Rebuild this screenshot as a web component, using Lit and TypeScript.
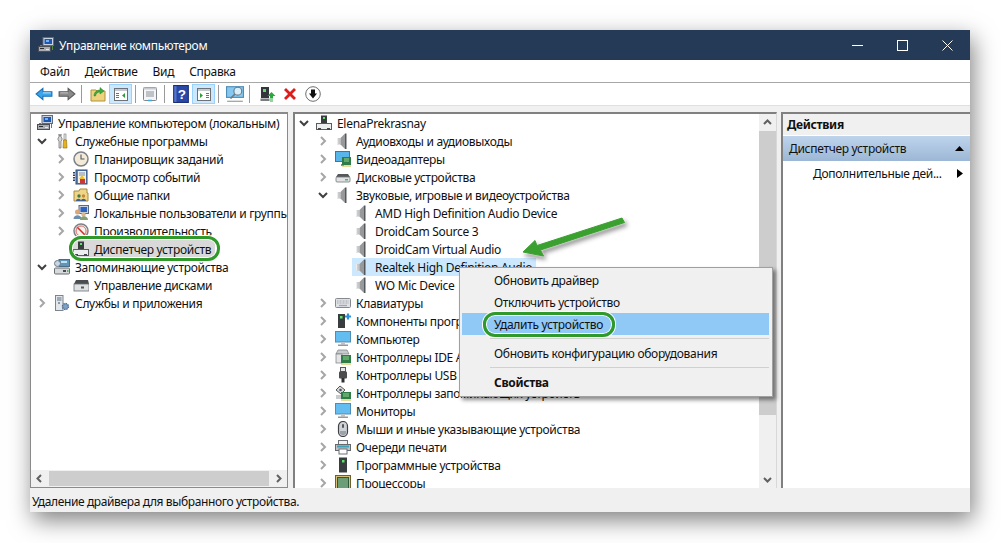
import { LitElement, css, html, svg } from "lit";
import { customElement } from "lit/decorators.js";

// 16x16 icon drawings, keyed by name
const ICONS: Record<string, unknown> = {
  mgmt: svg`<rect x="5" y="0.5" width="10.5" height="8" fill="#c9d3e0" stroke="#5d6b80"/><rect x="6.5" y="2" width="7.5" height="5" fill="#1f55b5"/><rect x="8" y="3" width="3" height="2" fill="#6fb4ef"/><rect x="0.5" y="9.5" width="12" height="5" fill="#a9adb3" stroke="#4b4f55"/><rect x="2" y="11" width="4" height="1" fill="#2a2d31"/><rect x="8" y="12" width="3" height="1" fill="#e8e8e8"/><path d="M2 8h2v1H2zM14 9h1v4h-1z" fill="#4f8f3c"/>`,
  tools: svg`<path d="M5 1v3l-1 1v2l1 1v7h2V8l1-1V5L7 4V1L6.500 3h-1z" fill="#d7d7d7" stroke="#6b6b6b" stroke-width=".7"/><rect x="10" y="1" width="2" height="6" fill="#e8e8e8" stroke="#777" stroke-width=".6"/><path d="M9.500 7h3l.5 8h-4z" fill="#e8b21a" stroke="#8f6a07" stroke-width=".6"/>`,
  clock: svg`<circle cx="8" cy="8" r="7" fill="#f3ead8" stroke="#7d8088" stroke-width="1.500"/><path d="M8 3.500V8h3.500" fill="none" stroke="#55585e" stroke-width="1.100"/>`,
  event: svg`<rect x="3" y="1" width="11" height="14" fill="#5f84b8" stroke="#2f4c78"/><rect x="5" y="2" width="8" height="12" fill="#f3f0e5"/><path d="M6 4h6M6 6h6" stroke="#7b90ad"/><path d="M9 6l3 4H6z" fill="#efc22d"/><rect x="7" y="10" width="5" height="4" fill="#c9383a"/><path d="M1 3v10" stroke="#27406a" stroke-width="2" stroke-dasharray="1.500 1"/>`,
  share: svg`<path d="M1 4h5l1-2h7v4h1v8H1z" fill="#f0d588" stroke="#a88a3c"/><circle cx="6" cy="9" r="1.700" fill="#3f7d4a"/><circle cx="10.500" cy="9" r="1.700" fill="#c08a3a"/><path d="M3 14c0-3 5-3 5 0zM8 14c0-3 5-3 5 0z" fill="#3d5f8e"/>`,
  users: svg`<rect x="6" y="0.500" width="9.500" height="8" fill="#c9d3e0" stroke="#5d6b80"/><rect x="7.500" y="2" width="6.500" height="5" fill="#2a63c2"/><circle cx="4.500" cy="7" r="2.500" fill="#d8a878"/><path d="M0.500 14c0-5 8-5 8 0z" fill="#6a8fb5"/><circle cx="10.500" cy="9.500" r="2.200" fill="#e0b48a"/><path d="M7 15c0-5 8-5 8 0z" fill="#86a070"/>`,
  perf: svg`<circle cx="8" cy="8" r="7" fill="#f7f3ea" stroke="#7d8088" stroke-width="1.500"/><path d="M4 4l8 8" stroke="#cc2f2f" stroke-width="1.600"/><path d="M8 3a5 5 0 1 0 .1 0" fill="none" stroke="#d85a5a"/>`,
  devmgr: svg`<rect x="5" y="0.500" width="6" height="7.500" fill="#3a3d40"/><rect x="7" y="2" width="2" height="2" fill="#5fe26a"/><rect x="0.500" y="8.500" width="15" height="6" fill="#eceef0" stroke="#5a5d60"/><rect x="2" y="13" width="3" height="2" fill="#44484c"/><rect x="11" y="13" width="3" height="2" fill="#44484c"/>`,
  storage: svg`<rect x="5" y="0.500" width="10.500" height="7" fill="#5f96b8" stroke="#4b6c86"/><rect x="7" y="2" width="6" height="2" fill="#bfe3f5"/><circle cx="3.500" cy="4.500" r="3" fill="#c7d6e0" stroke="#66798a"/><rect x="0.500" y="9" width="15" height="6" rx="1" fill="#d7dadd" stroke="#6a6d70"/><rect x="9" y="11" width="3" height="2" fill="#4a4d50"/><rect x="13" y="11" width="1.500" height="2" fill="#4bbd52"/>`,
  disk: svg`<path d="M3 3h12l1 4H1z" fill="#4a4d50"/><rect x="1" y="7" width="15" height="7" fill="#dfe1e3" stroke="#6d7073" stroke-width=".8"/><rect x="8" y="9.500" width="3" height="2" fill="#55585b"/>`,
  services: svg`<rect x="1.500" y="0.500" width="7.500" height="15" fill="#e3e6ea" stroke="#7c848e"/><path d="M3 3h4.500M3 5h4.500" stroke="#5d6f84"/><circle cx="5" cy="8" r="1" fill="#6d7f92"/><circle cx="11.500" cy="11.500" r="3" fill="#7ea0c4" stroke="#4c6f97" stroke-width="1.400" stroke-dasharray="1.500 .8"/>`,
  speaker: svg`<rect x="2" y="5" width="3.500" height="6.500" fill="#c4c6c8"/><rect x="2" y="5" width="1.200" height="6.500" fill="#ececec"/><path d="M5.500 5l4.500-4.500v15.500l-4.500-4.500z" fill="#97999b"/><path d="M10 0.500h1.500v15.500H10z" fill="#55585b"/>`,
  video: svg`<rect x="0.500" y="0.500" width="14" height="10" fill="#58b5ea" stroke="#3279ad"/><path d="M6 14h3" stroke="#8a8a8a" stroke-width="2"/><rect x="7" y="6" width="9" height="8" fill="#2e7d48"/><path d="M9 8h5M9 10h5" stroke="#9bd28d"/><path d="M7 15h9" stroke="#d8b53e"/>`,
  hdd: svg`<path d="M3 5h10l2 3H1z" fill="#55585b"/><rect x="1" y="8" width="14" height="5" rx="1" fill="#e0e2e4" stroke="#737679" stroke-width=".8"/><rect x="10" y="10" width="3" height="1.500" fill="#4bbd52"/>`,
  keyboard: svg`<rect x="0.500" y="3.500" width="15" height="9" rx="1" fill="#dfe2e5" stroke="#85898e"/><path d="M2 6h12M2 8h12" stroke="#a3a7ac" stroke-dasharray="1 .5"/><path d="M4 10.500h8" stroke="#a3a7ac" stroke-width="1.300"/>`,
  soft: svg`<rect x="3" y="1" width="7" height="14" fill="#3a3d40"/><rect x="5" y="3" width="2.500" height="2.500" fill="#5fe26a"/><path d="M13 .5v6M10 3.500h6" stroke="#2f8fd8" stroke-width="2.200"/>`,
  monitor: svg`<rect x="0.500" y="0.500" width="15" height="10.500" fill="#63bdf0" stroke="#4e8fb8"/><rect x="6" y="11" width="4" height="2.500" fill="#c0c4c8"/><rect x="3" y="13.500" width="10" height="1.500" fill="#94989c"/>`,
  ide: svg`<path d="M3 1h9l2 4H1z" fill="#c9ccce" stroke="#7a7d80" stroke-width=".7"/><rect x="1" y="5" width="6" height="9" fill="#e2e4e6" stroke="#7a7d80" stroke-width=".7"/><rect x="6" y="6" width="10" height="8" fill="#2e7d48"/><path d="M8 8h6M8 10h6" stroke="#9bd28d"/><path d="M6 15h10" stroke="#d8b53e"/>`,
  usb: svg`<rect x="5.500" y="0.500" width="5" height="4" fill="#e6e6e6" stroke="#55585b"/><rect x="4" y="4.500" width="8" height="7" rx="1" fill="#4a4d50"/><rect x="6.500" y="11" width="3" height="4.500" fill="#2d2f31"/>`,
  sata: svg`<path d="M5 1l5 4-4 4-5-4z" fill="#d6d8da" stroke="#55585b"/><circle cx="5.500" cy="5" r="1.300" fill="#55585b"/><rect x="1" y="10" width="5" height="4" fill="#c9ccce"/><rect x="6" y="7" width="10" height="7" fill="#2e7d48"/><path d="M8 9h6M8 11h6" stroke="#9bd28d"/><path d="M6 15h10" stroke="#d8b53e"/>`,
  mouse: svg`<rect x="3.500" y="0.500" width="9" height="15" rx="4.500" fill="#cfd3d7" stroke="#3e4145" stroke-width="1.200"/><rect x="7" y="3" width="2" height="4" rx="1" fill="#55595e"/><path d="M5 10h6v3l-3 1.500L5 13z" fill="#9da2a8"/>`,
  printer: svg`<rect x="3.500" y="1.500" width="9" height="4" fill="#f2f2f2" stroke="#6c6f73"/><rect x="0.500" y="5.500" width="15" height="6" fill="#bfc3c7" stroke="#65686c"/><rect x="2" y="6.500" width="12" height="2" fill="#3fa0b8"/><rect x="4" y="10" width="8" height="5" fill="#fff" stroke="#6c6f73"/>`,
  tower: svg`<rect x="4" y="0.500" width="8" height="15" fill="#3a3d40"/><rect x="7" y="3" width="2.500" height="2.500" fill="#5fe26a"/>`,
  cpu: svg`<rect x="0.500" y="0.500" width="15" height="15" fill="#d9c078" stroke="#6e5f2c"/><rect x="2.500" y="2.500" width="11" height="11" fill="#6b9e76" stroke="#2f5a3a"/>`,
  back: svg`<path d="M1 8l6-5v3h8v4H7v3z" fill="#3aa5ea" stroke="#1d6fb5"/><path d="M7 7h7" stroke="#a9dcfa"/>`,
  forward: svg`<path d="M15 8L9 3v3H1v4h8v3z" fill="#8b8b8b" stroke="#5c5c5c"/><path d="M2 7h7" stroke="#bcbcbc"/>`,
  folderUp: svg`<path d="M1 4h5l1 1h8v10H1z" fill="#efd27e" stroke="#b1913f"/><path d="M4 10c0-4 3-6 6-6V1.500l4 3.500-4 3V6c-2 0-4 1-4.500 4z" fill="#3dab3f" stroke="#27802b" stroke-width=".5"/>`,
  paneL: svg`<rect x="1.500" y="2.500" width="13" height="12" fill="#fff" stroke="#6c7278"/><rect x="2" y="3" width="12" height="2" fill="#c5cad0"/><path d="M3 7h3v1H3zM3 9h3v1H3zM3 11h3v1H3z" fill="#4a78b0"/><path d="M12 7v5l-3-2.500z" fill="#2da03a"/>`,
  paneR: svg`<rect x="1.500" y="2.500" width="13" height="12" fill="#fff" stroke="#6c7278"/><rect x="2" y="3" width="12" height="2" fill="#c5cad0"/><path d="M10 7h3v1h-3zM10 9h3v1h-3zM10 11h3v1h-3z" fill="#4a78b0"/><path d="M4 7v5l3-2.500z" fill="#2da03a"/>`,
  list: svg`<rect x="1.500" y="1.500" width="13" height="13" rx="1" fill="#f4f5f6" stroke="#7f858b"/><rect x="1.500" y="1.500" width="13" height="2" fill="#c5cad0"/><path d="M4 6h8M4 8h8M4 10h8" stroke="#8a9096"/><path d="M6 14.500h4" stroke="#3fa5e0" stroke-width="1.500"/>`,
  help: svg`<rect x="1.500" y="0.500" width="13" height="15" fill="#2a48a8" stroke="#1a2f78"/><rect x="2" y="1" width="2" height="14" fill="#5774c8"/><text x="5" y="12.500" font-family="Liberation Sans, sans-serif" font-size="12" font-weight="700" fill="#fff">?</text>`,
  find: svg`<rect x="0.500" y="1.500" width="15" height="9.500" fill="#86c8f0" stroke="#4e8fb8"/><circle cx="10.500" cy="5.500" r="3.500" fill="#d8eefa" stroke="#6a7a88"/><path d="M8 8l-4 4" stroke="#6a7a88" stroke-width="1.500"/><path d="M1 14.500h14" stroke="#a5a9ad" stroke-width="1.200"/>`,
  devUp: svg`<rect x="1" y="1" width="8" height="11" fill="#33363a"/><rect x="3" y="3" width="3" height="3" fill="#5fe26a"/><rect x="0.500" y="12.500" width="9" height="2.500" fill="#7a7d80"/><path d="M11.500 6l4 4h-2.500v2h-3v-2H7.500z" fill="#2aa83a"/><path d="M10 13h3M10 15h3" stroke="#2aa83a"/>`,
  del: svg`<path d="M2 4l2-2 4 4 4-4 2 2-4 4 4 4-2 2-4-4-4 4-2-2 4-4z" fill="#dd1c1c"/>`,
  down: svg`<circle cx="8" cy="8" r="7.300" fill="#fff" stroke="#6e6e6e"/><path d="M6 3.500h4v4h2l-4 5-4-5h2z" fill="#111"/>`,
};

const icon = (name: string, big = false) =>
  html`<svg class="ico ${big ? "big" : ""}" viewBox="0 0 16 16">${ICONS[name]}</svg>`;

const chevRight = html`<svg class="chev" viewBox="0 0 16 16"><path d="M6 4l4 4-4 4" fill="none" stroke="#a6a6a6" stroke-width="2"/></svg>`;
const chevDown = html`<svg class="chev" viewBox="0 0 16 16"><path d="M4 6l4 4 4-4" fill="none" stroke="#404040" stroke-width="2"/></svg>`;

type Row = { level: number; label: string; icon: string; state?: "open" | "closed"; sel?: boolean };

const LEFT_ROWS: Row[] = [
  { level: 0, label: "Управление компьютером (локальным)", icon: "mgmt" },
  { level: 1, label: "Служебные программы", icon: "tools", state: "open" },
  { level: 2, label: "Планировщик заданий", icon: "clock", state: "closed" },
  { level: 2, label: "Просмотр событий", icon: "event", state: "closed" },
  { level: 2, label: "Общие папки", icon: "share", state: "closed" },
  { level: 2, label: "Локальные пользователи и группы", icon: "users", state: "closed" },
  { level: 2, label: "Производительность", icon: "perf", state: "closed" },
  { level: 2, label: "Диспетчер устройств", icon: "devmgr", sel: true },
  { level: 1, label: "Запоминающие устройства", icon: "storage", state: "open" },
  { level: 2, label: "Управление дисками", icon: "disk" },
  { level: 1, label: "Службы и приложения", icon: "services", state: "closed" },
];

const MID_ROWS: Row[] = [
  { level: 0, label: "ElenaPrekrasnay", icon: "devmgr", state: "open" },
  { level: 1, label: "Аудиовходы и аудиовыходы", icon: "speaker", state: "closed" },
  { level: 1, label: "Видеоадаптеры", icon: "video", state: "closed" },
  { level: 1, label: "Дисковые устройства", icon: "hdd", state: "closed" },
  { level: 1, label: "Звуковые, игровые и видеоустройства", icon: "speaker", state: "open" },
  { level: 2, label: "AMD High Definition Audio Device", icon: "speaker" },
  { level: 2, label: "DroidCam Source 3", icon: "speaker" },
  { level: 2, label: "DroidCam Virtual Audio", icon: "speaker" },
  { level: 2, label: "Realtek High Definition Audio", icon: "speaker", sel: true },
  { level: 2, label: "WO Mic Device", icon: "speaker" },
  { level: 1, label: "Клавиатуры", icon: "keyboard", state: "closed" },
  { level: 1, label: "Компоненты программного обеспечения", icon: "soft", state: "closed" },
  { level: 1, label: "Компьютер", icon: "monitor", state: "closed" },
  { level: 1, label: "Контроллеры IDE ATA/ATAPI", icon: "ide", state: "closed" },
  { level: 1, label: "Контроллеры USB", icon: "usb", state: "closed" },
  { level: 1, label: "Контроллеры запоминающих устройств", icon: "sata", state: "closed" },
  { level: 1, label: "Мониторы", icon: "monitor", state: "closed" },
  { level: 1, label: "Мыши и иные указывающие устройства", icon: "mouse", state: "closed" },
  { level: 1, label: "Очереди печати", icon: "printer", state: "closed" },
  { level: 1, label: "Программные устройства", icon: "tower", state: "closed" },
  { level: 1, label: "Процессоры", icon: "cpu", state: "closed" },
];

@customElement("app-root")
export class AppRoot extends LitElement {
  static override styles = css`
    :host {
      display: block;
      position: relative;
      width: 1001px;
      height: 543px;
      padding: 30px 31px 31px 30px;
      box-sizing: border-box;
      overflow: hidden;
      background: #fff;
      font: 12px "Noto Sans", "Open Sans", sans-serif;
      letter-spacing: -0.3px;
      color: #111;
    }
    .window {
      height: 100%;
      display: flex;
      flex-direction: column;
      background: #f0f0f0;
      box-shadow: 3px 8px 22px rgba(0, 0, 0, 0.5);
    }
    .ico {
      width: 16px;
      height: 16px;
      flex: none;
      display: block;
    }
    .ico.big {
      width: 18px;
      height: 18px;
    }
    .chev {
      width: 16px;
      height: 16px;
      flex: none;
    }
    .titlebar {
      height: 30px;
      flex: none;
      display: flex;
      align-items: center;
      padding-left: 8px;
      background: #243a56;
      color: #fff;
    }
    .titlebar .name {
      margin-left: 5px;
      flex: 1;
    }
    .wbtn {
      width: 45px;
      height: 30px;
      display: flex;
      align-items: center;
      justify-content: center;
    }
    .wbtn svg {
      width: 11px;
      height: 11px;
    }
    .menubar {
      height: 22px;
      flex: none;
      display: flex;
      align-items: center;
      gap: 15px;
      padding-left: 10px;
      background: #fff;
      border-bottom: 1px solid #a8a8a8;
    }
    .toolbar {
      height: 22px;
      flex: none;
      display: flex;
      align-items: center;
      padding-left: 2px;
      background: #fff;
      border-bottom: 1px solid #e0e0e0;
    }
    .tb {
      width: 23px;
      height: 20px;
      box-sizing: border-box;
      display: flex;
      align-items: center;
      justify-content: center;
    }
    .tb.narrow {
      width: 21px;
    }
    .tb.on {
      background: #cce8ff;
      border: 1px solid #99d1ff;
    }
    .sep {
      width: 1px;
      height: 18px;
      background: #9a9a9a;
      margin: 0 4px 0 3px;
      flex: none;
    }
    .sep.tight {
      margin-right: 2px;
    }
    .sep.wide {
      margin-right: 7px;
    }
    .panes {
      flex: 1;
      min-height: 0;
      display: flex;
      padding-top: 6px;
    }
    .pane {
      box-sizing: border-box;
      background: #fff;
      overflow: hidden;
      display: flex;
    }
    .pane.left {
      width: 258px;
      flex-direction: column;
      border: 1px solid #8a8a8a;
      border-top-width: 2px;
      margin-right: 5px;
    }
    .pane.mid {
      width: 484px;
      border-left: 2px solid #808080;
      border-top: 2px solid #808080;
      border-right: 1px solid #d8d8d8;
      margin-right: 4px;
    }
    .pane.right {
      width: 189px;
      flex-direction: column;
      border-left: 2px solid #808080;
      border-top: 2px solid #808080;
    }
    .tree {
      flex: 1;
      min-width: 0;
      min-height: 0;
      overflow: hidden;
    }
    .row {
      height: 18px;
      display: flex;
      align-items: center;
      white-space: nowrap;
    }
    .left .l0 {
      padding-left: 2px;
    }
    .left .l1 {
      padding-left: 3px;
    }
    .left .l2 {
      padding-left: 22px;
    }
    .mid .l0 {
      padding-left: 1px;
    }
    .mid .l1 {
      padding-left: 20px;
    }
    .mid .l2 {
      padding-left: 39px;
    }
    .item {
      display: flex;
      align-items: center;
      gap: 5px;
      height: 18px;
      margin-left: 2px;
      padding: 0 4px 0 2px;
    }
    .item.sel {
      background: #d9d9d9;
    }
    .mid .item.sel {
      background: #cce8ff;
    }
    .hscroll {
      height: 17px;
      flex: none;
      display: flex;
      align-items: center;
      background: #f0f0f0;
    }
    .hscroll .thumb {
      flex: 1;
      height: 15px;
      margin: 0 1px;
      background: #cdcdcd;
    }
    .arrow {
      width: 17px;
      height: 17px;
      flex: none;
    }
    .vscroll {
      width: 17px;
      flex: none;
      display: flex;
      flex-direction: column;
      background: #f0f0f0;
    }
    .vscroll .thumb {
      height: 284px;
      background: #cdcdcd;
    }
    .vscroll .grow {
      flex: 1;
    }
    .act-head {
      height: 21px;
      flex: none;
      display: flex;
      align-items: center;
      padding-left: 4px;
      font-weight: 700;
      background: #f0f0f0;
      border-bottom: 1px solid #fff;
    }
    .act-sel {
      height: 25px;
      flex: none;
      display: flex;
      align-items: center;
      justify-content: space-between;
      padding: 0 6px;
      background: linear-gradient(#bed4ec, #9cb7d5);
    }
    .act-item {
      height: 24px;
      display: flex;
      align-items: center;
      justify-content: space-between;
      padding: 0 6px 0 30px;
    }
    .tri {
      width: 9px;
      height: 9px;
      flex: none;
    }
    .status {
      height: 24px;
      flex: none;
      box-sizing: border-box;
      display: flex;
      align-items: center;
      padding: 2px 0 0 2px;
      letter-spacing: -0.38px;
      background: #f0f0f0;
    }
    .menu {
      position: absolute;
      left: 459px;
      top: 267px;
      width: 314px;
      height: 130px;
      box-sizing: border-box;
      padding: 1px 3px 0 2px;
      background: #f0f0f0;
      border: 1px solid #a0a0a0;
      box-shadow: 3px 3px 4px rgba(0, 0, 0, 0.45);
    }
    .mi {
      height: 22px;
      display: flex;
      align-items: center;
      padding-left: 32px;
    }
    .mi.hi {
      background: #90c8f6;
    }
    .mi.bold {
      font-weight: 700;
    }
    .msep {
      height: 1px;
      margin: 3px 0 3px 28px;
      background: #d0d0d0;
    }
    .oval {
      position: absolute;
      box-sizing: border-box;
      border: 3px solid #2f9a2a;
      border-radius: 12px;
      box-shadow: 0 0 0 1px #fff, inset 0 0 0 1px #fff;
    }
    .oval.tree-oval {
      left: 69px;
      top: 236px;
      width: 151px;
      height: 25px;
    }
    .oval.menu-oval {
      left: 483px;
      top: 312px;
      width: 132px;
      height: 25px;
    }
    .pointer {
      position: absolute;
      left: 510px;
      top: 210px;
      width: 125px;
      height: 55px;
      filter: drop-shadow(0 0 1px #fff) drop-shadow(2px 3px 2px rgba(0, 0, 0, 0.4));
    }
  `;

  private renderRow(r: Row) {
    const chev = r.state === "open" ? chevDown : r.state === "closed" ? chevRight : html`<span class="chev"></span>`;
    return html`<div class="row l${r.level}">
      ${r.level === 0 && !r.state ? "" : chev}
      <span class="item ${r.sel ? "sel" : ""}">${icon(r.icon)}<span>${r.label}</span></span>
    </div>`;
  }

  override render() {
    return html`
      <div class="window">
        <div class="titlebar">
          ${icon("mgmt")}
          <span class="name">Управление компьютером</span>
          <div class="wbtn"><svg viewBox="0 0 11 11"><path d="M0 5.500h11" stroke="#fff"/></svg></div>
          <div class="wbtn"><svg viewBox="0 0 11 11"><rect x=".5" y=".5" width="10" height="10" fill="none" stroke="#fff"/></svg></div>
          <div class="wbtn"><svg viewBox="0 0 11 11"><path d="M.5.500l10 10M10.500.500l-10 10" stroke="#fff"/></svg></div>
        </div>
        <div class="menubar">
          <span>Файл</span><span>Действие</span><span>Вид</span><span>Справка</span>
        </div>
        <div class="toolbar">
          <div class="tb">${icon("back", true)}</div>
          <div class="tb">${icon("forward", true)}</div>
          <div class="sep"></div>
          <div class="tb">${icon("folderUp")}</div>
          <div class="tb on">${icon("paneL")}</div>
          <div class="sep tight"></div>
          <div class="tb">${icon("list")}</div>
          <div class="sep"></div>
          <div class="tb">${icon("help", true)}</div>
          <div class="tb on">${icon("paneR")}</div>
          <div class="sep"></div>
          <div class="tb">${icon("find", true)}</div>
          <div class="sep wide"></div>
          <div class="tb narrow">${icon("devUp")}</div>
          <div class="tb">${icon("del")}</div>
          <div class="tb">${icon("down")}</div>
        </div>
        <div class="panes">
          <div class="pane left">
            <div class="tree">${LEFT_ROWS.map((r) => this.renderRow(r))}</div>
            <div class="hscroll">
              <svg class="arrow" viewBox="0 0 17 17"><path d="M10 5l-3.500 3.500 3.500 3.500" fill="none" stroke="#606060" stroke-width="2"/></svg>
              <div class="thumb"></div>
              <svg class="arrow" viewBox="0 0 17 17"><path d="M7 5l3.500 3.500L7 12" fill="none" stroke="#606060" stroke-width="2"/></svg>
            </div>
          </div>
          <div class="pane mid">
            <div class="tree">${MID_ROWS.map((r) => this.renderRow(r))}</div>
            <div class="vscroll">
              <svg class="arrow" viewBox="0 0 17 17"><path d="M5 10l3.500-3.500L12 10" fill="none" stroke="#606060" stroke-width="2"/></svg>
              <div class="thumb"></div>
              <div class="grow"></div>
              <svg class="arrow" viewBox="0 0 17 17"><path d="M5 7l3.500 3.500L12 7" fill="none" stroke="#606060" stroke-width="2"/></svg>
            </div>
          </div>
          <div class="pane right">
            <div class="act-head">Действия</div>
            <div class="act-sel">
              <span>Диспетчер устройств</span>
              <svg class="tri" viewBox="0 0 9 9"><path d="M0 7l4.500-5L9 7z" fill="#000"/></svg>
            </div>
            <div class="act-item">
              <span>Дополнительные дей...</span>
              <svg class="tri" viewBox="0 0 9 9"><path d="M2 0l6 4.500L2 9z" fill="#000"/></svg>
            </div>
          </div>
        </div>
        <div class="status">Удаление драйвера для выбранного устройства.</div>
      </div>
      <div class="oval tree-oval"></div>
      <svg class="pointer" viewBox="510 210 125 55">
        <path d="M523 252L535 240.500L537 245.500L622 218L624.500 222.500L540.500 250L543.500 256Z" fill="#3aa02f" stroke="#3aa02f" stroke-width="1" stroke-linejoin="round"/>
      </svg>
      <div class="menu">
        <div class="mi">Обновить драйвер</div>
        <div class="mi">Отключить устройство</div>
        <div class="mi hi">Удалить устройство</div>
        <div class="msep"></div>
        <div class="mi">Обновить конфигурацию оборудования</div>
        <div class="msep"></div>
        <div class="mi bold">Свойства</div>
      </div>
      <div class="oval menu-oval"></div>
    `;
  }
}
